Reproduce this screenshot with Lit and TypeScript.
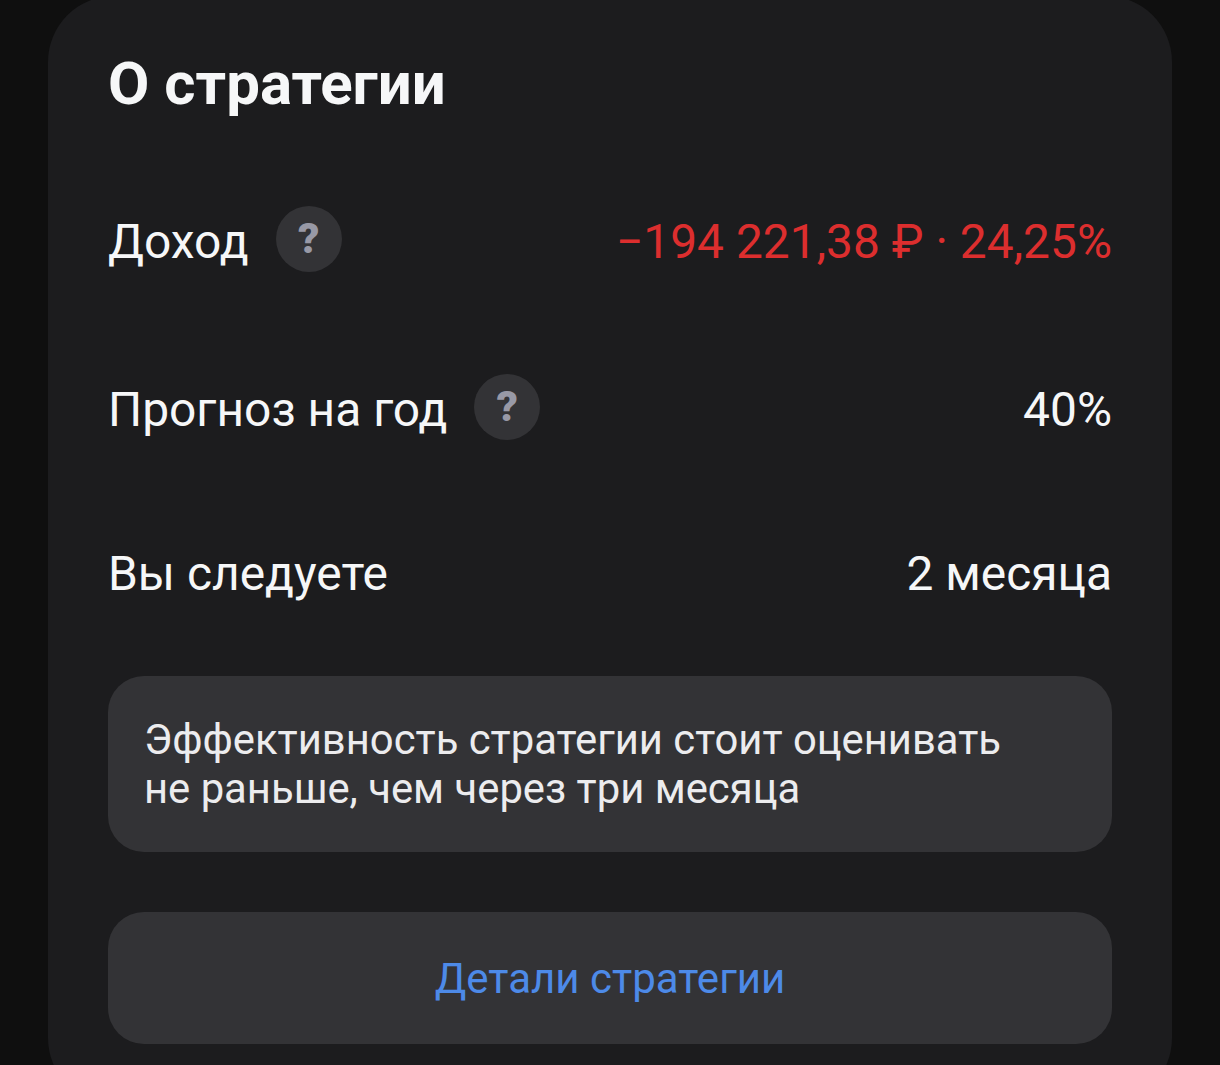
import { LitElement, html, css } from "lit";
import { customElement } from "lit/decorators.js";

@customElement("app-root")
export class AppRoot extends LitElement {
  static styles = css`
    :host {
      display: block;
      width: 1220px;
      height: 1065px;
      overflow: hidden;
      background: #0f0f0f;
      font-family: Roboto, "Noto Sans", sans-serif;
      color: #f6f7f8;
    }
    .card {
      box-sizing: border-box;
      width: 1124px;
      height: 1108px;
      margin: -4px 48px 0;
      padding: 55px 60px 0;
      border-radius: 66px;
      background: #1c1c1e;
      display: flex;
      flex-direction: column;
    }
    h1 {
      margin: 0;
      font-size: 60px;
      line-height: 66px;
      font-weight: 700;
    }
    .row {
      display: flex;
      justify-content: space-between;
      align-items: center;
      font-size: 47.9px;
      line-height: 66px;
      font-weight: 400;
    }
    .r1 { margin-top: 92px; }
    .r2 { margin-top: 102px; }
    .r3 { margin-top: 98px; }
    .label {
      display: flex;
      align-items: center;
      gap: 27px;
    }
    .help {
      width: 66px;
      height: 66px;
      margin-top: -7px;
      border-radius: 50%;
      background: #333336;
      color: #9899a6;
      font-size: 42px;
      font-weight: 900;
      line-height: 66px;
      text-align: center;
    }
    .neg { color: #dc2e2e; }
    .note {
      margin-top: 69px;
      height: 176px;
      box-sizing: border-box;
      padding: 39px 36px;
      border-radius: 36px;
      background: #333336;
      font-size: 41.8px;
      line-height: 49px;
      color: #ececee;
    }
    .btn {
      margin-top: 60px;
      height: 132px;
      border-radius: 36px;
      background: #333336;
      color: #4d8ae8;
      font-size: 42px;
      display: flex;
      align-items: center;
      justify-content: center;
    }
  `;

  render() {
    return html`
      <div class="card">
        <h1>О стратегии</h1>
        <div class="row r1">
          <div class="label"><span>Доход</span><span class="help">?</span></div>
          <span class="neg">−194 221,38 ₽ · 24,25%</span>
        </div>
        <div class="row r2">
          <div class="label"><span>Прогноз на год</span><span class="help">?</span></div>
          <span>40%</span>
        </div>
        <div class="row r3">
          <span>Вы следуете</span>
          <span>2 месяца</span>
        </div>
        <div class="note">Эффективность стратегии стоит оценивать<br />не раньше, чем через три месяца</div>
        <div class="btn">Детали стратегии</div>
      </div>
    `;
  }
}
